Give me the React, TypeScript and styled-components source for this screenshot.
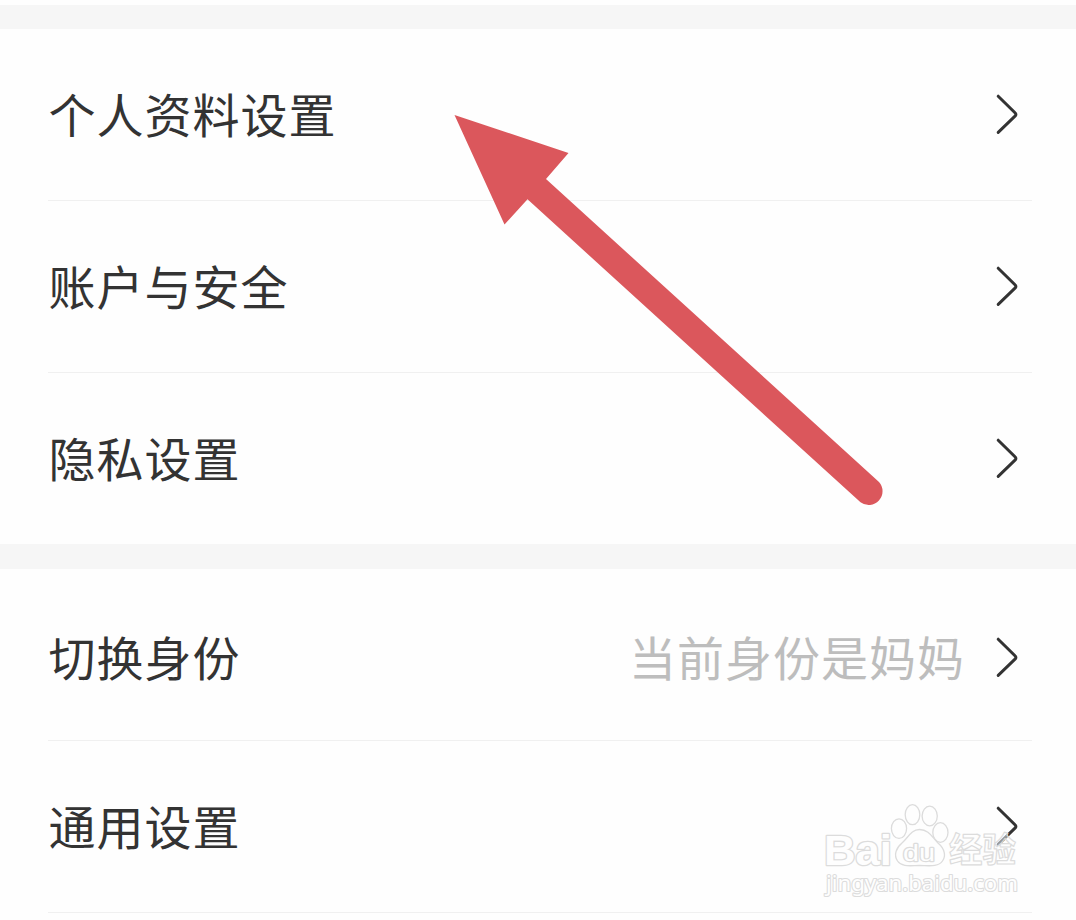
import React, { FC } from 'react'
import styled, { createGlobalStyle } from 'styled-components'

interface SettingItem {
  title: string
  /* 右侧的说明文字 */
  extra?: string
}

interface CellProps extends SettingItem {
  /* 最后一项不展示分割线 */
  noBorder?: boolean
}

const ACCOUNT_LIST: SettingItem[] = [
  { title: '个人资料设置' },
  { title: '账户与安全' },
  { title: '隐私设置' },
]

const COMMON_LIST: SettingItem[] = [
  { title: '切换身份', extra: '当前身份是妈妈' },
  { title: '通用设置' },
]

const GlobalStyle = createGlobalStyle`
  body {
    margin: 0;
    background: #fefefe;
    font-family: 'Noto Sans CJK SC', 'Noto Sans', sans-serif;
  }
`

const Page = styled.main`
  position: relative;
  box-sizing: border-box;
  width: 1076px;
  height: 920px;
  padding-top: 5px;
  overflow: hidden;
`

const Gap = styled.div<{ $height: number }>`
  height: ${(p) => p.$height}px;
  background: #f6f6f6;
`

const Group = styled.section`
  padding: 0 44px 0 48px;
`

const Row = styled.div<{ $noBorder?: boolean; $hasExtra?: boolean }>`
  box-sizing: border-box;
  display: flex;
  align-items: center;
  height: ${(p) => (p.$noBorder ? 171 : 172)}px;
  padding: ${(p) => (p.$hasExtra ? '4px 13px 0 0' : '0 13px 2px 0')};
  border-bottom: ${(p) => (p.$noBorder ? 'none' : '1px solid #f0f0f0')};
`

const Title = styled.span`
  flex: 1;
  padding: 0 0 2px 0.5px;
  color: #333;
  font-size: 47px;
  line-height: 70px;
  letter-spacing: 1px;
`

const Extra = styled.span`
  padding-bottom: 2px;
  margin-right: 28px;
  color: #bdbdbd;
  font-size: 47px;
  line-height: 70px;
  letter-spacing: 1px;
`

const Chevron = styled.svg`
  display: block;
  width: 26px;
  height: 44px;
  fill: none;
  stroke: #333;
  stroke-width: 3;
  stroke-linecap: round;
  stroke-linejoin: round;
`

const Arrow = styled.svg`
  position: absolute;
  top: 110px;
  left: 450px;
  width: 440px;
  height: 400px;
  fill: #db575c;
  stroke: none;
`

const Watermark = styled.svg`
  position: absolute;
  top: 800px;
  left: 820px;
  width: 204px;
  height: 100px;
  fill: #fefefe;
  stroke: #dcdcdc;
  stroke-width: 1.3;
  stroke-linejoin: round;
`

const Brand = styled.text`
  font-family: 'Liberation Sans', Arial, sans-serif;
  font-size: 43px;
  font-weight: 700;
  stroke-width: 2.6;
  paint-order: stroke;
`

const BrandSmall = styled.text`
  font-family: 'Liberation Sans', Arial, sans-serif;
  font-size: 24px;
  stroke-width: 2.4;
  paint-order: stroke;
`

const BrandCn = styled.text`
  font-family: 'Noto Sans CJK SC', sans-serif;
  font-size: 34px;
  font-weight: 700;
  fill-opacity: 0.5;
  stroke-width: 1.2;
`

const Site = styled.text`
  font-family: 'Noto Sans', sans-serif;
  font-size: 22px;
  stroke-width: 2.2;
  paint-order: stroke;
`

const Cell: FC<CellProps> = ({ title, extra, noBorder }) => (
  <Row $noBorder={noBorder} $hasExtra={!!extra}>
    <Title>{title}</Title>
    {extra && <Extra>{extra}</Extra>}
    <Chevron viewBox='0 0 26 44'>
      <path d='M5.2 4.2 L22 20.8 Q23.8 22.5 22 24.2 L5.2 40.4' />
    </Chevron>
  </Row>
)

const App: FC = () => {
  return (
    <Page>
      <GlobalStyle />
      <Gap $height={24} />
      <Group>
        {ACCOUNT_LIST.map((item, index) => (
          <Cell key={item.title} {...item} noBorder={index === ACCOUNT_LIST.length - 1} />
        ))}
      </Group>
      <Gap $height={25} />
      <Group>
        {COMMON_LIST.map((item) => (
          <Cell key={item.title} {...item} />
        ))}
      </Group>

      <Arrow viewBox='0 0 440 400'>
        <path d='M4.5 5 L118.5 43 L96 69 L429 372 A13.8 13.8 0 0 1 410.5 392.3 L77.5 89.3 L54.5 114.5 Z' />
      </Arrow>

      <Watermark viewBox='0 0 204 100'>
        <Brand x='4' y='64.5' textLength='68' lengthAdjust='spacingAndGlyphs'>
          Bai
        </Brand>
        <ellipse cx='79' cy='28.6' rx='7.6' ry='9.8' />
        <ellipse cx='92.5' cy='14.7' rx='7.3' ry='10' />
        <ellipse cx='109.7' cy='16' rx='7.6' ry='9.8' />
        <ellipse cx='120.4' cy='32.5' rx='7.6' ry='9.8' />
        <path d='M99.5 29.5 C109 29.5 112 37 118 43 C125 49 126 56 122.5 61 C118 67.5 108 65.5 99.5 65.5 C91 65.5 82 67.5 77.5 61 C73.5 55 76 48 82 43 C88 38 91 29.5 99.5 29.5 Z' />
        <BrandSmall x='83' y='60.5' textLength='32' lengthAdjust='spacingAndGlyphs'>
          du
        </BrandSmall>
        <BrandCn x='129' y='62' textLength='67' lengthAdjust='spacingAndGlyphs'>
          经验
        </BrandCn>
        <Site x='6' y='91' textLength='192' lengthAdjust='spacingAndGlyphs'>
          jingyan.baidu.com
        </Site>
      </Watermark>
    </Page>
  )
}

export default App
